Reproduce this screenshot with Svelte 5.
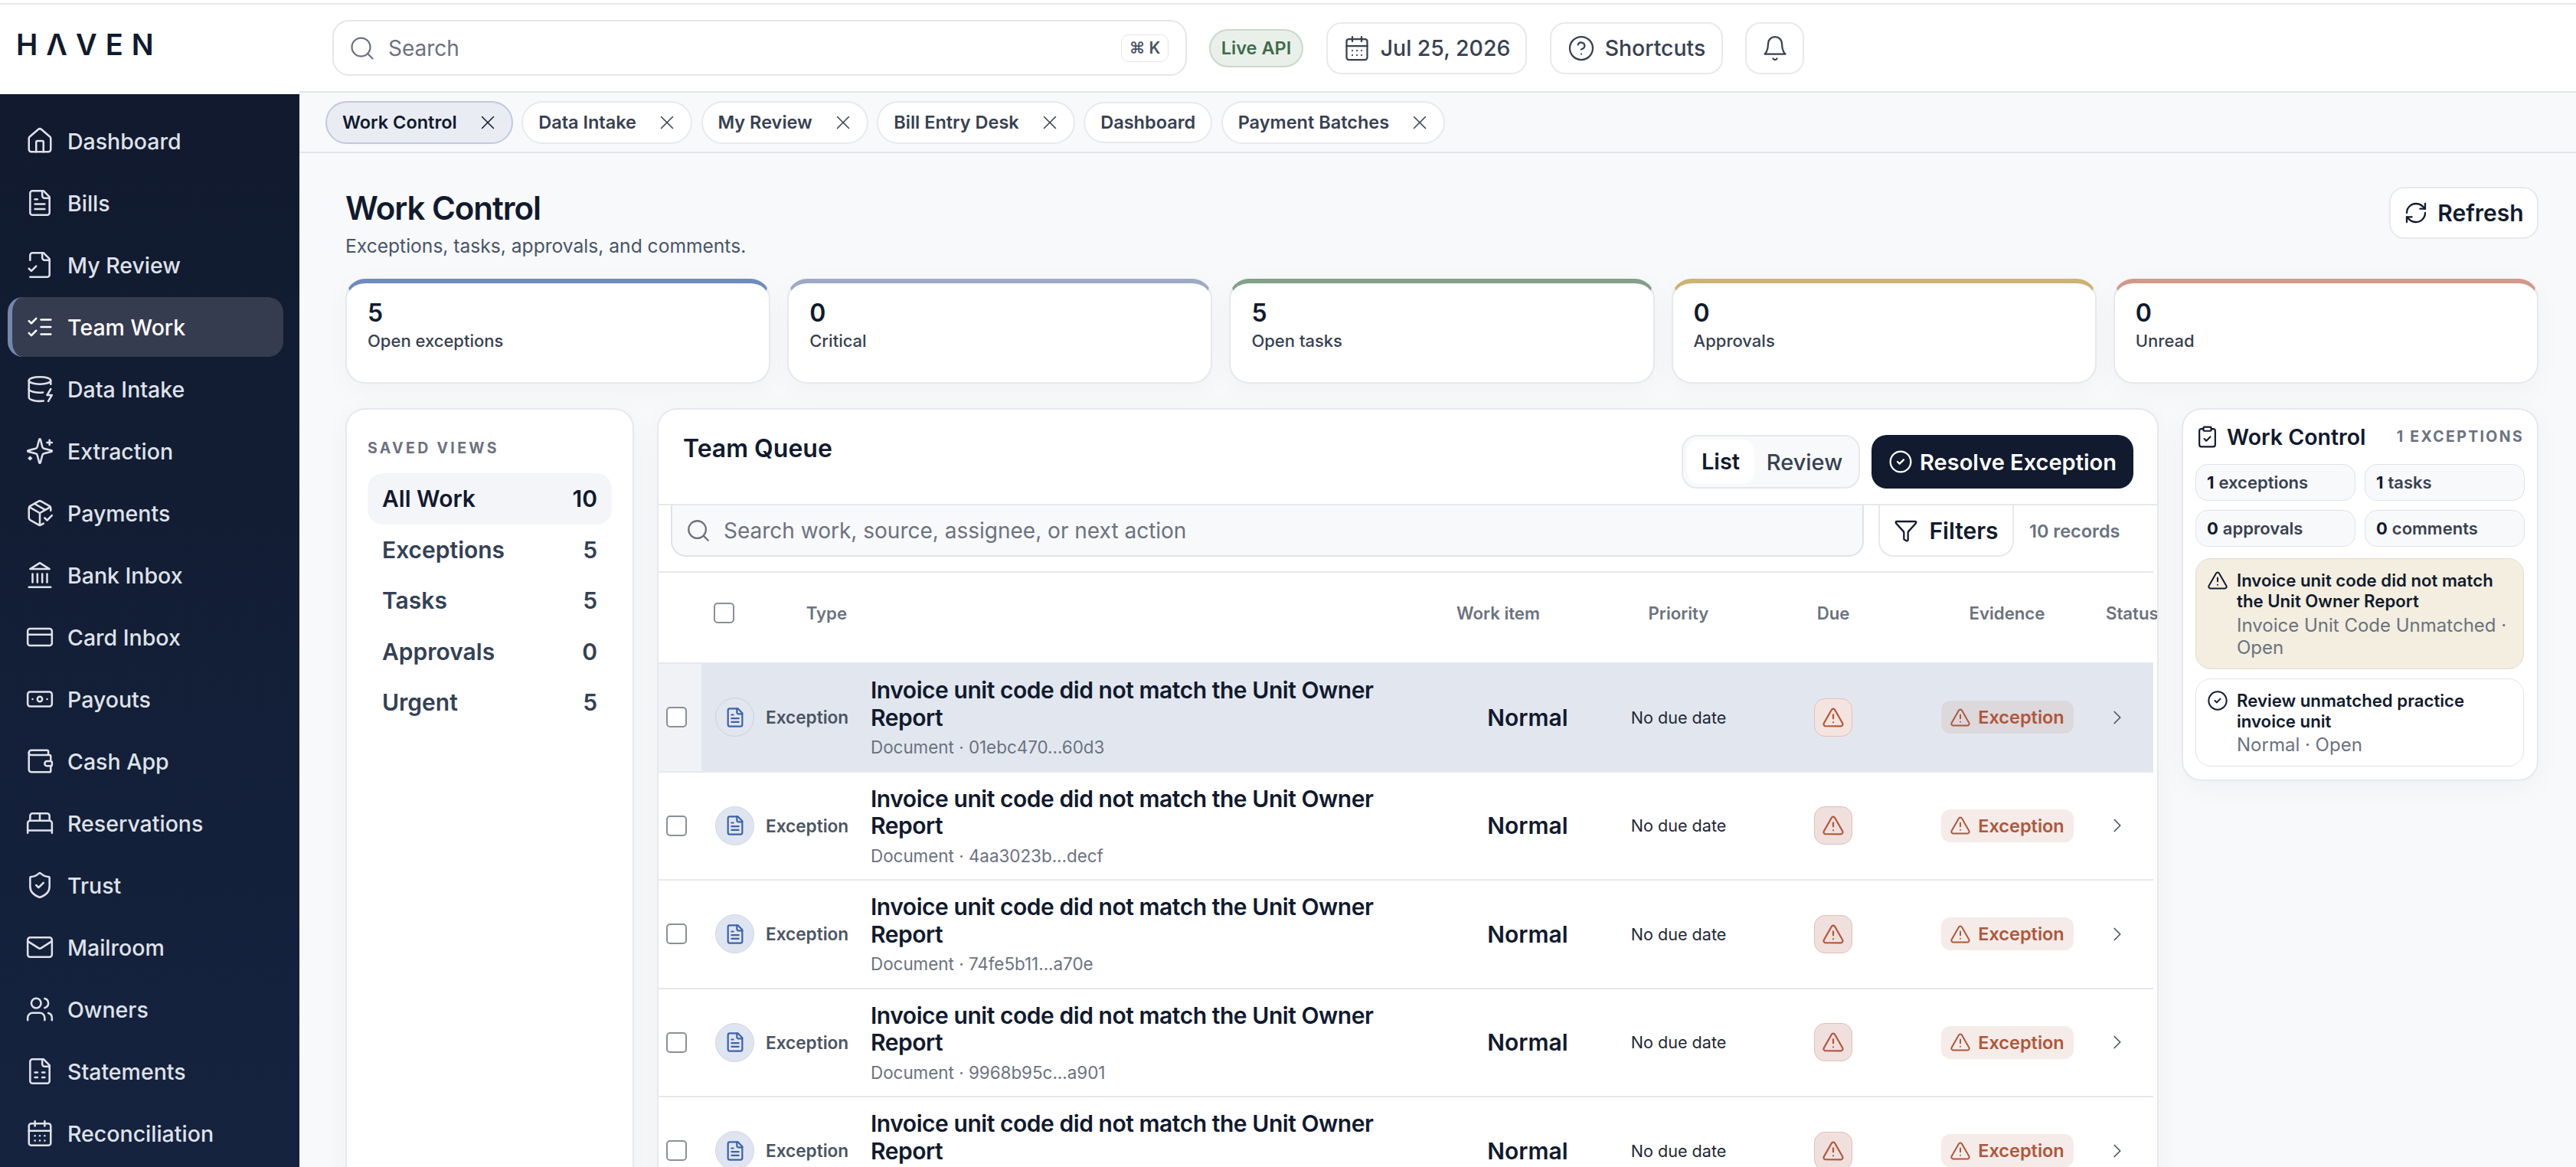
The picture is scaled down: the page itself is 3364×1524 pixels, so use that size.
<script lang="ts">
const icons: Record<string, string> = {
  home: '<path d="M3 10a2 2 0 0 1 .7-1.5l7-6a2 2 0 0 1 2.6 0l7 6A2 2 0 0 1 21 10v9a2 2 0 0 1-2 2H5a2 2 0 0 1-2-2z"/><path d="M15 21v-8a1 1 0 0 0-1-1h-4a1 1 0 0 0-1 1v8"/>',
  fileText: '<path d="M15 2H6a2 2 0 0 0-2 2v16a2 2 0 0 0 2 2h12a2 2 0 0 0 2-2V7Z"/><path d="M14 2v4a2 2 0 0 0 2 2h4"/><path d="M10 9H8"/><path d="M16 13H8"/><path d="M16 17H8"/>',
  fileCheck: '<path d="M4 22h14a2 2 0 0 0 2-2V7l-5-5H6a2 2 0 0 0-2 2v4"/><path d="M14 2v4a2 2 0 0 0 2 2h4"/><path d="m3 15 2 2 4-4"/>',
  listChecks: '<path d="m3 17 2 2 4-4"/><path d="m3 7 2 2 4-4"/><path d="M13 6h8"/><path d="M13 12h8"/><path d="M13 18h8"/>',
  databaseZap: '<ellipse cx="12" cy="5" rx="9" ry="3"/><path d="M3 5V19A9 3 0 0 0 15 21.84"/><path d="M21 5V8"/><path d="M21 12L18 17H22L19 22"/><path d="M3 12A9 3 0 0 0 14.59 14.87"/>',
  sparkles: '<path d="M9.937 15.5A2 2 0 0 0 8.5 14.063l-6.135-1.582a.5.5 0 0 1 0-.962L8.5 9.936A2 2 0 0 0 9.937 8.5l1.582-6.135a.5.5 0 0 1 .963 0L14.063 8.5A2 2 0 0 0 15.5 9.937l6.135 1.581a.5.5 0 0 1 0 .964L15.5 14.063a2 2 0 0 0-1.437 1.437l-1.582 6.135a.5.5 0 0 1-.963 0z"/><path d="M20 3v4"/><path d="M22 5h-4"/><path d="M4 17v2"/><path d="M5 18H3"/>',
  packageCheck: '<path d="m16 16 2 2 4-4"/><path d="M21 10V8a2 2 0 0 0-1-1.73l-7-4a2 2 0 0 0-2 0l-7 4A2 2 0 0 0 3 8v8a2 2 0 0 0 1 1.73l7 4a2 2 0 0 0 2 0l2-1.14"/><path d="m7.5 4.27 9 5.15"/><path d="M3.29 7 12 12l8.71-5"/><path d="M12 22V12"/>',
  landmark: '<path d="M3 22h18"/><path d="M6 18v-7"/><path d="M10 18v-7"/><path d="M14 18v-7"/><path d="M18 18v-7"/><path d="M12 2l8 5H4z"/>',
  card: '<rect width="20" height="14" x="2" y="5" rx="2"/><path d="M2 10h20"/>',
  banknote: '<rect width="20" height="12" x="2" y="6" rx="2"/><circle cx="12" cy="12" r="2"/><path d="M6 12h.01M18 12h.01"/>',
  wallet: '<path d="M19 7V4a1 1 0 0 0-1-1H5a2 2 0 0 0 0 4h15a1 1 0 0 1 1 1v4h-3a2 2 0 0 0 0 4h3a1 1 0 0 0 1-1v-2a1 1 0 0 0-1-1"/><path d="M3 5v14a2 2 0 0 0 2 2h15a1 1 0 0 0 1-1v-4"/>',
  bed: '<path d="M2 20v-8a2 2 0 0 1 2-2h16a2 2 0 0 1 2 2v8"/><path d="M4 10V6a2 2 0 0 1 2-2h12a2 2 0 0 1 2 2v4"/><path d="M12 4v6"/><path d="M2 18h20"/>',
  shieldCheck: '<path d="M20 13c0 5-3.5 7.5-7.66 8.95a1 1 0 0 1-.67-.01C7.5 20.5 4 18 4 13V6a1 1 0 0 1 1-1c2 0 4.5-1.2 6.24-2.72a1.17 1.17 0 0 1 1.52 0C14.51 3.81 17 5 19 5a1 1 0 0 1 1 1z"/><path d="m9 12 2 2 4-4"/>',
  mail: '<rect width="20" height="16" x="2" y="4" rx="2"/><path d="m22 7-8.97 5.7a1.94 1.94 0 0 1-2.06 0L2 7"/>',
  users: '<path d="M16 21v-2a4 4 0 0 0-4-4H6a4 4 0 0 0-4 4v2"/><circle cx="9" cy="7" r="4"/><path d="M22 21v-2a4 4 0 0 0-3-3.87"/><path d="M16 3.13a4 4 0 0 1 0 7.75"/>',
  fileSheet: '<path d="M15 2H6a2 2 0 0 0-2 2v16a2 2 0 0 0 2 2h12a2 2 0 0 0 2-2V7Z"/><path d="M14 2v4a2 2 0 0 0 2 2h4"/><path d="M8 13h2"/><path d="M14 13h2"/><path d="M8 17h2"/><path d="M14 17h2"/>',
  calendar: '<path d="M8 2v4"/><path d="M16 2v4"/><rect width="18" height="18" x="3" y="4" rx="2"/><path d="M3 10h18"/><path d="M8 14h.01"/><path d="M12 14h.01"/><path d="M16 14h.01"/><path d="M8 18h.01"/><path d="M12 18h.01"/><path d="M16 18h.01"/>',
  search: '<circle cx="11" cy="11" r="8"/><path d="m21 21-4.3-4.3"/>',
  x: '<path d="M18 6 6 18"/><path d="m6 6 12 12"/>',
  help: '<circle cx="12" cy="12" r="10"/><path d="M9.09 9a3 3 0 0 1 5.83 1c0 2-3 3-3 3"/><path d="M12 17h.01"/>',
  bell: '<path d="M6 8a6 6 0 0 1 12 0c0 7 3 9 3 9H3s3-2 3-9"/><path d="M10.3 21a1.94 1.94 0 0 0 3.4 0"/>',
  refresh: '<path d="M3 12a9 9 0 0 1 9-9 9.75 9.75 0 0 1 6.74 2.74L21 8"/><path d="M21 3v5h-5"/><path d="M21 12a9 9 0 0 1-9 9 9.75 9.75 0 0 1-6.74-2.74L3 16"/><path d="M8 16H3v5"/>',
  circleCheck: '<circle cx="12" cy="12" r="10"/><path d="m9 12 2 2 4-4"/>',
  funnel: '<path d="M10 20a1 1 0 0 0 .553.895l2 1A1 1 0 0 0 14 21v-7a2 2 0 0 1 .517-1.341L21.74 4.67A1 1 0 0 0 21 3H3a1 1 0 0 0-.742 1.67l7.225 7.989A2 2 0 0 1 10 14z"/>',
  alert: '<path d="m21.73 18-8-14a2 2 0 0 0-3.48 0l-8 14A2 2 0 0 0 4 21h16a2 2 0 0 0 1.73-3"/><path d="M12 9v4"/><path d="M12 17h.01"/>',
  chevron: '<path d="m9 18 6-6-6-6"/>',
  clipboard: '<rect width="8" height="4" x="8" y="2" rx="1"/><path d="M16 4h2a2 2 0 0 1 2 2v14a2 2 0 0 1-2 2H6a2 2 0 0 1-2-2V6a2 2 0 0 1 2-2h2"/><path d="m9 14 2 2 4-4"/>'
};

const nav = [
  ["Dashboard", "home"],
  ["Bills", "fileText"],
  ["My Review", "fileCheck"],
  ["Team Work", "listChecks"],
  ["Data Intake", "databaseZap"],
  ["Extraction", "sparkles"],
  ["Payments", "packageCheck"],
  ["Bank Inbox", "landmark"],
  ["Card Inbox", "card"],
  ["Payouts", "banknote"],
  ["Cash App", "wallet"],
  ["Reservations", "bed"],
  ["Trust", "shieldCheck"],
  ["Mailroom", "mail"],
  ["Owners", "users"],
  ["Statements", "fileSheet"],
  ["Reconciliation", "calendar"]
];

const tabs = [
  { label: "Work Control", close: true, active: true },
  { label: "Data Intake", close: true },
  { label: "My Review", close: true },
  { label: "Bill Entry Desk", close: true },
  { label: "Dashboard", close: false },
  { label: "Payment Batches", close: true }
];

const stats = [
  { value: 5, label: "Open exceptions", tone: "blue" },
  { value: 0, label: "Critical", tone: "periwinkle" },
  { value: 5, label: "Open tasks", tone: "green" },
  { value: 0, label: "Approvals", tone: "yellow" },
  { value: 0, label: "Unread", tone: "salmon" }
];

const views = [
  ["All Work", 10],
  ["Exceptions", 5],
  ["Tasks", 5],
  ["Approvals", 0],
  ["Urgent", 5]
];

const records = ["01ebc470...60d3", "4aa3023b...decf", "74fe5b11...a70e", "9968b95c...a901", "c20d7e14...8b52"];
const summary = [
  [1, "exceptions"],
  [1, "tasks"],
  [0, "approvals"],
  [0, "comments"]
];
</script>

{#snippet icon(name: string, cls: string)}
  <svg class="icon {cls}" viewBox="0 0 24 24" fill="none" stroke="currentColor" stroke-linecap="round" stroke-linejoin="round">{@html icons[name]}</svg>
{/snippet}

<div class="app">
  <div class="left">
    <div class="brand">HΛVEN</div>
    <nav class="sidebar">
      {#each nav as [label, name]}
        <div class="nav-item" class:active={label === "Team Work"}>
          {@render icon(name, "i-nav")}
          <span>{label}</span>
        </div>
      {/each}
    </nav>
  </div>

  <div class="right">
    <header class="topbar">
      <div class="global-search">
        {@render icon("search", "i-search")}
        <span class="grow">Search</span>
        <kbd>⌘ K</kbd>
      </div>
      <span class="live">Live API</span>
      <button class="top-btn date">{@render icon("calendar", "i-top")}Jul 25, 2026</button>
      <button class="top-btn shortcuts">{@render icon("help", "i-top")}Shortcuts</button>
      <button class="top-btn bell">{@render icon("bell", "i-top")}</button>
    </header>

    <div class="tabs">
      {#each tabs as tab}
        <div class="tab" class:active={tab.active} class:plain={!tab.close}>
          <span>{tab.label}</span>
          {#if tab.close}{@render icon("x", "i-close")}{/if}
        </div>
      {/each}
    </div>

    <main class="content">
      <div class="page-head">
        <div>
          <h1>Work Control</h1>
          <p>Exceptions, tasks, approvals, and comments.</p>
        </div>
        <button class="refresh">{@render icon("refresh", "i-action")}Refresh</button>
      </div>

      <div class="stats">
        {#each stats as stat}
          <div class="stat {stat.tone}">
            <strong>{stat.value}</strong>
            <span>{stat.label}</span>
          </div>
        {/each}
      </div>

      <div class="panels">
        <aside class="panel saved">
          <h3>SAVED VIEWS</h3>
          {#each views as [label, count], i}
            <div class="view" class:active={i === 0}>
              <span>{label}</span><span>{count}</span>
            </div>
          {/each}
        </aside>

        <section class="panel queue">
          <div class="queue-head">
            <h2>Team Queue</h2>
            <div class="actions">
              <div class="segment"><span class="on">List</span><span>Review</span></div>
              <button class="resolve">{@render icon("circleCheck", "i-action")}Resolve Exception</button>
            </div>
          </div>
          <div class="toolbar">
            <div class="table-search">
              {@render icon("search", "i-search-sm")}
              <span>Search work, source, assignee, or next action</span>
            </div>
            <button class="filters">{@render icon("funnel", "i-action")}Filters</button>
            <span class="count">10 records</span>
          </div>

          <div class="table">
            <div class="row head">
              <div></div>
              <div class="type-head"><span class="check"></span><span>Type</span></div>
              <div></div>
              <div>Work item</div>
              <div class="center">Priority</div>
              <div class="center">Due</div>
              <div class="center">Evidence</div>
              <div class="nowrap">Status</div>
            </div>
            {#each records as id, i}
              <div class="row item" class:selected={i === 0}>
                <div class="cell-check"><span class="check"></span></div>
                <div class="cell-type">
                  <span class="doc">{@render icon("fileText", "i-doc")}</span>
                  <span>Exception</span>
                </div>
                <div class="cell-title">
                  <div class="title">Invoice unit code did not match the Unit Owner Report</div>
                  <div class="sub">Document · {id}</div>
                </div>
                <div class="center normal">Normal</div>
                <div class="center due">No due date</div>
                <div class="center"><span class="due-icon">{@render icon("alert", "i-alert")}</span></div>
                <div class="center"><span class="badge">{@render icon("alert", "i-badge")}Exception</span></div>
                <div class="chev">{@render icon("chevron", "i-chevron")}</div>
              </div>
            {/each}
          </div>
        </section>

        <aside class="panel side">
          <div class="side-head">
            {@render icon("clipboard", "i-clip")}
            <h4>Work Control</h4>
            <span>1 EXCEPTIONS</span>
          </div>
          <div class="chips">
            {#each summary as [n, label]}
              <div class="chip"><b>{n}</b> {label}</div>
            {/each}
          </div>
          <div class="note warn">
            {@render icon("alert", "i-note")}
            <div>
              <div class="note-title">Invoice unit code did not match the Unit Owner Report</div>
              <div class="note-sub">Invoice Unit Code Unmatched · Open</div>
            </div>
          </div>
          <div class="note">
            {@render icon("circleCheck", "i-note")}
            <div>
              <div class="note-title">Review unmatched practice invoice unit</div>
              <div class="note-sub">Normal · Open</div>
            </div>
          </div>
        </aside>
      </div>
    </main>
  </div>
</div>

<style>
:global(body) {
  margin: 0;
  background: #fff;
  font-family: "Inter", "Liberation Sans", sans-serif;
  color: #111a2e;
  overflow: hidden;
}

* {
  box-sizing: border-box;
}

button {
  font: inherit;
  cursor: pointer;
}

h1, h2, h3, h4, p {
  margin: 0;
}

.icon {
  display: block;
  flex: none;
  stroke-width: 2;
}

.i-nav { width: 38px; height: 38px; stroke-width: 1.6; }
.i-search { width: 36px; height: 36px; stroke-width: 1.5; color: #6b7280; }
.i-search-sm { width: 34px; height: 34px; stroke-width: 1.6; color: #6b7280; }
.i-top { width: 36px; height: 36px; stroke-width: 1.5; }
.i-close { width: 30px; height: 30px; stroke-width: 1.2; }
.i-action { width: 32px; height: 32px; stroke-width: 1.7; }
.i-doc { width: 28px; height: 28px; stroke-width: 1.9; }
.i-alert { width: 30px; height: 30px; stroke-width: 1.8; }
.i-badge { width: 28px; height: 28px; stroke-width: 1.7; }
.i-chevron { width: 30px; height: 30px; stroke-width: 1.4; }
.i-clip { width: 31px; height: 31px; stroke-width: 1.7; }
.i-note { width: 28px; height: 28px; stroke-width: 1.7; }

.app {
  width: 3364px;
  height: 1524px;
  display: grid;
  grid-template-columns: 391px minmax(0, 1fr);
  padding-top: 4px;
  overflow: hidden;
}

.left {
  display: flex;
  flex-direction: column;
  border-top: 2px solid #e5e7eb;
  min-height: 0;
}

.brand {
  height: 117px;
  flex: none;
  padding: 29px 0 0 21px;
  font-size: 38px;
  line-height: 46px;
  font-weight: 600;
  letter-spacing: 0.29em;
  color: #111a2e;
}

.sidebar {
  flex: 1;
  background: linear-gradient(180deg, #111a2e 0%, #15233f 100%);
  padding: 22px 21px 0 10px;
  display: flex;
  flex-direction: column;
  gap: 3px;
}

.nav-item {
  height: 78px;
  flex: none;
  display: flex;
  align-items: center;
  gap: 17px;
  padding-left: 23px;
  font-size: 28.5px;
  font-weight: 500;
  color: #dfe2ea;
  border-radius: 20px;
}

.nav-item.active {
  background: #363c4f;
  color: #fff;
  border-left: 6px solid #7587ae;
  padding-left: 17px;
}

.right {
  display: flex;
  flex-direction: column;
  min-width: 0;
  min-height: 0;
  border-top: 2px solid #e5e7eb;
}

.topbar {
  height: 115px;
  flex: none;
  display: flex;
  align-items: center;
  padding-left: 43px;
  background: #fff;
  border-bottom: 2px solid #e3e5ea;
}

.global-search {
  width: 1116px;
  height: 73px;
  display: flex;
  align-items: center;
  gap: 16px;
  padding: 0 22px 0 19px;
  border: 2px solid #e4e6eb;
  border-radius: 22px;
  font-size: 28px;
  color: #6b7280;
}

.grow {
  flex: 1;
}

kbd {
  width: 62px;
  height: 36px;
  display: flex;
  align-items: center;
  justify-content: center;
  border: 1px solid #e4e6eb;
  border-radius: 10px;
  font-family: inherit;
  font-size: 21px;
  font-weight: 600;
  color: #475569;
}

.live {
  width: 123px;
  height: 50px;
  margin-left: 29px;
  display: flex;
  align-items: center;
  justify-content: center;
  border: 2px solid #ccd6ce;
  border-radius: 25px;
  background: #e9f0ea;
  color: #3f6b4a;
  font-size: 23.5px;
  font-weight: 600;
}

.top-btn {
  height: 68px;
  display: flex;
  align-items: center;
  justify-content: center;
  gap: 13px;
  border: 2px solid #e7e9ed;
  border-radius: 20px;
  background: #fff;
  font-size: 28.4px;
  font-weight: 500;
  color: #374151;
  padding: 0;
}

.date { width: 262px; margin-left: 30px; }
.shortcuts { width: 226px; margin-left: 30px; }
.bell { width: 77px; margin-left: 29px; }

.tabs {
  height: 79px;
  flex: none;
  display: flex;
  align-items: center;
  gap: 11.5px;
  padding-left: 34px;
  background: #f8f9fb;
  border-bottom: 2px solid #e3e5ea;
}

.tab {
  height: 56px;
  display: flex;
  align-items: center;
  gap: 25px;
  padding: 0 16px 0 20px;
  border: 2px solid #e7e9ed;
  border-radius: 28px;
  background: #fff;
  font-size: 23.5px;
  font-weight: 600;
  color: #374151;
}

.tab.plain {
  height: 54px;
  padding-right: 20px;
}

.tab.active {
  background: #e9ecf3;
  border-color: #c0c9de;
  color: #111a2e;
}

.content {
  flex: 1;
  min-height: 0;
  overflow: hidden;
  padding: 44px 49px 0 60px;
  background: #f8f9fb;
}

.page-head {
  display: flex;
  justify-content: space-between;
  align-items: flex-start;
}

h1 {
  font-size: 42px;
  line-height: 56px;
  font-weight: 600;
  letter-spacing: -0.025em;
}

.page-head p {
  margin-top: 3px;
  font-size: 24.6px;
  line-height: 36px;
  color: #475569;
}

.refresh {
  width: 195px;
  height: 68px;
  display: flex;
  align-items: center;
  justify-content: center;
  gap: 12px;
  padding: 0;
  border: 2px solid #e7e9ed;
  border-radius: 20px;
  background: #fff;
  color: #111a2e;
  font-size: 30px;
  font-weight: 600;
}

.stats {
  margin-top: 25px;
  display: grid;
  grid-template-columns: repeat(5, minmax(0, 1fr));
  gap: 22px;
}

.stat {
  height: 137px;
  padding: 19px 27px 0;
  display: flex;
  flex-direction: column;
  background: #fff;
  border: 2px solid #e6e8ed;
  border-top-width: 6px;
  border-radius: 26px;
  box-shadow: 0 8px 36px rgba(15, 23, 42, 0.035);
}

.stat strong {
  font-size: 32px;
  line-height: 40px;
  font-weight: 600;
}

.stat span {
  font-size: 22px;
  line-height: 32px;
  font-weight: 500;
  color: #374151;
}

.blue { border-top-color: #6f8bbd; }
.periwinkle { border-top-color: #9fa9c6; }
.green { border-top-color: #82a08a; }
.yellow { border-top-color: #ccb273; }
.salmon { border-top-color: #d2988c; }

.panels {
  margin-top: 32px;
  display: grid;
  grid-template-columns: 377px minmax(0, 1fr) 466px;
  gap: 30px;
  align-items: stretch;
}

.panel {
  background: #fff;
  border: 2px solid #e6e8ed;
  border-radius: 26px;
  box-shadow: 0 8px 36px rgba(15, 23, 42, 0.04);
}

.saved {
  padding: 37px 27px 0;
}

.saved h3 {
  font-size: 19.5px;
  line-height: 26px;
  font-weight: 700;
  letter-spacing: 0.17em;
  color: #6b7280;
  margin-bottom: 20px;
}

.view {
  height: 66.5px;
  display: flex;
  align-items: center;
  justify-content: space-between;
  padding: 0 19px;
  border-radius: 20px;
  font-size: 30px;
  font-weight: 600;
  color: #334155;
}

.view.active {
  background: #f3f5f9;
  color: #111a2e;
}

.queue {
  overflow: hidden;
  min-width: 0;
}

.queue-head {
  height: 125px;
  display: flex;
  justify-content: space-between;
  align-items: flex-start;
  padding: 33px 31px 0 32px;
  border-bottom: 2px solid #e6e8ed;
}

h2 {
  font-size: 32px;
  line-height: 36px;
  font-weight: 600;
}

.actions {
  display: flex;
  gap: 15px;
}

.segment {
  width: 233px;
  height: 70px;
  display: flex;
  align-items: center;
  padding: 0 5px;
  background: #f8f9fb;
  border: 2px solid #e6e8ed;
  border-radius: 20px;
  font-size: 29px;
  font-weight: 500;
  color: #374151;
}

.segment span {
  flex: 1;
  text-align: center;
}

.segment .on {
  flex: none;
  width: 88px;
  height: 58px;
  line-height: 58px;
  background: #fff;
  border-radius: 16px;
  font-weight: 600;
  color: #111a2e;
}

.resolve {
  width: 342px;
  height: 70px;
  display: flex;
  align-items: center;
  justify-content: center;
  gap: 9px;
  padding: 0;
  border: none;
  border-radius: 20px;
  background: #111a2e;
  color: #fff;
  font-size: 29px;
  font-weight: 600;
}

.toolbar {
  height: 88px;
  display: flex;
  align-items: flex-start;
  padding-left: 16px;
  border-bottom: 2px solid #e6e8ed;
  width: 1952px;
}

.table-search {
  width: 1558px;
  height: 67px;
  display: flex;
  align-items: center;
  gap: 16px;
  padding-left: 17px;
  background: #f8f9fb;
  border: 2px solid #dfe2ea;
  border-top: none;
  border-radius: 0 0 20px 20px;
  font-size: 28px;
  color: #6b7280;
}

.filters {
  width: 177px;
  height: 67px;
  margin-left: 19px;
  display: flex;
  align-items: center;
  justify-content: center;
  gap: 14px;
  padding: 0;
  background: #fff;
  border: 2px solid #e6e8ed;
  border-top: none;
  border-radius: 0 0 20px 20px;
  font-size: 30px;
  font-weight: 600;
  color: #111a2e;
}

.count {
  margin-left: 20px;
  line-height: 67px;
  font-size: 23.5px;
  font-weight: 600;
  color: #6b7280;
}

.table {
  width: 1952px;
}

.row {
  display: grid;
  grid-template-columns: 56px 206px 780px 186px 208px 196px 258px 62px;
  align-items: center;
}

.center {
  display: flex;
  justify-content: center;
}

.row.head {
  height: 117px;
  padding-bottom: 12px;
  font-size: 22.2px;
  font-weight: 600;
  color: #6b7280;
}

.type-head {
  display: flex;
  align-items: center;
  justify-content: space-between;
  padding: 0 16px;
}

.nowrap {
  white-space: nowrap;
}

.check {
  display: block;
  width: 27px;
  height: 27px;
  background: #fff;
  border: 2px solid #8b8f97;
  border-radius: 5px;
}

.row.item {
  height: 141.5px;
  border-top: 2px solid #e6e8ed;
  align-items: stretch;
}

.row.item > div {
  display: flex;
  align-items: center;
}

.row.item > .center {
  justify-content: center;
}

.cell-check {
  padding-left: 10px;
}

.cell-type {
  padding-left: 18px;
  gap: 15px;
  font-size: 22.6px;
  font-weight: 600;
  color: #4b5563;
}

.doc {
  width: 51px;
  height: 51px;
  display: flex;
  align-items: center;
  justify-content: center;
  flex: none;
  border-radius: 50%;
  background: #dfe5f0;
  border: 1px solid #cfd6e5;
  color: #3b63ad;
}

.row.item > .cell-title {
  display: block;
  padding: 17px 0 0 15px;
}

.title {
  font-size: 30px;
  line-height: 35.7px;
  font-weight: 600;
  letter-spacing: -0.45px;
  color: #111a2e;
  width: 680px;
}

.sub {
  margin-top: 6px;
  font-size: 22.4px;
  line-height: 30px;
  color: #6b7280;
}

.normal {
  font-size: 30px;
  font-weight: 600;
  color: #111a2e;
}

.due {
  font-size: 21.6px;
  color: #1f2937;
}

.due-icon {
  width: 50px;
  height: 50px;
  display: flex;
  align-items: center;
  justify-content: center;
  background: #efe0dd;
  border: 1px solid #e3bfb5;
  border-radius: 14px;
  color: #b4573d;
}

.badge {
  width: 173px;
  height: 43px;
  display: flex;
  align-items: center;
  justify-content: center;
  gap: 9px;
  background: #f5ebe8;
  border-radius: 12px;
  font-size: 23.5px;
  font-weight: 600;
  color: #b0563b;
}

.row.item > .chev {
  color: #4b5563;
}

.selected {
  background: #e2e7ef;
}

.selected .cell-check {
  background: #f0f2f6;
}

.selected .doc {
  background: transparent;
  border-color: #c8d0df;
}

.selected .due-icon {
  background: #f4e4e0;
}

.selected .badge {
  background: #dcd8dc;
}

.side {
  align-self: start;
  padding: 16px 17px 17px 16px;
}

.side-head {
  display: flex;
  align-items: center;
  height: 38px;
}

.side-head h4 {
  margin-left: 10px;
  font-size: 28.5px;
  font-weight: 600;
  color: #111a2e;
}

.side-head span {
  margin-left: auto;
  font-size: 19.5px;
  font-weight: 700;
  letter-spacing: 0.12em;
  color: #6b7280;
}

.chips {
  margin-top: 17px;
  display: grid;
  grid-template-columns: 209px 209px;
  gap: 12px;
}

.chip {
  height: 48px;
  display: flex;
  align-items: center;
  gap: 6px;
  padding-left: 14px;
  background: #f8f9fb;
  border: 1px solid #dfe2e8;
  border-radius: 16px;
  font-size: 22px;
  font-weight: 600;
  color: #374151;
}

.chip b {
  font-weight: 700;
  color: #111a2e;
}

.note {
  margin-top: 12px;
  display: flex;
  gap: 11px;
  padding: 14px 14px 13px 14px;
  background: #fff;
  border: 1px solid #e2e4ea;
  border-radius: 20px;
}

.note.warn {
  margin-top: 15px;
  background: #f3eedf;
  border-color: #e2dcc8;
}

.note-title {
  font-size: 22.2px;
  line-height: 27px;
  font-weight: 600;
  color: #111a2e;
}

.note-sub {
  margin-top: 3.5px;
  font-size: 24px;
  line-height: 29px;
  color: #6b7280;
}
</style>
